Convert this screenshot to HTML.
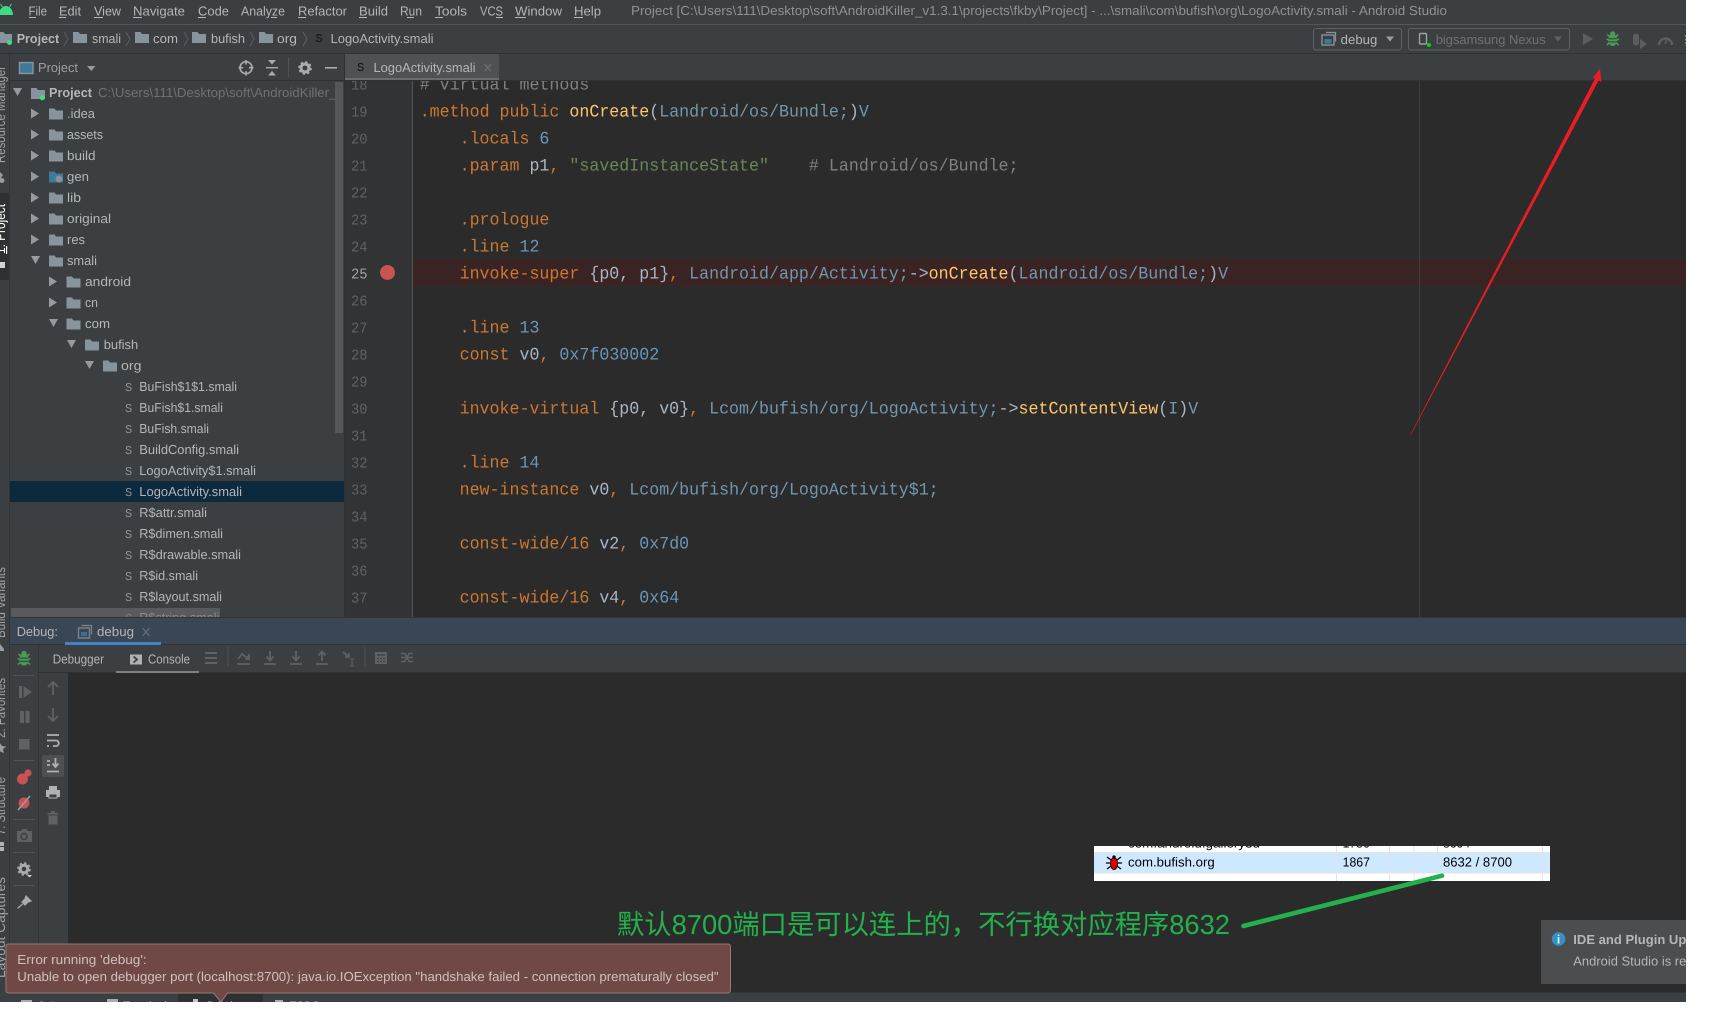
<!DOCTYPE html>
<html><head><meta charset="utf-8"><title>Android Studio</title>
<style>
html,body{margin:0;padding:0;background:#fff;width:1713px;height:1023px;overflow:hidden}
svg{display:block;position:absolute;left:0;top:0}
text{font-family:"Liberation Sans","Noto Sans CJK SC",sans-serif;font-size:13px;fill:#b4b6b8;white-space:pre;text-rendering:geometricPrecision}
.c text{font-family:"Liberation Mono","DejaVu Sans Mono",monospace;font-size:17.5px;fill:#a9b7c6}
.n text{font-family:"Liberation Mono",monospace;font-size:15px;fill:#606366}
.k{fill:#cc7832}.b{fill:#6897bb}.y{fill:#ffc66d}.t{fill:#7297ad}.g{fill:#6a8759}.r{fill:#808080}.p{fill:#a9b7c6}
.s text{font-family:"Liberation Mono",monospace;font-size:12px;fill:#8f9294}
.v text{fill:#9ea2a5;font-size:14px}
</style></head><body>
<svg width="1713" height="1023" viewBox="0 0 1713 1023" xmlns="http://www.w3.org/2000/svg">
<defs>
<path id="f" d="M0 0h5.5l1.5 2H14v9H0z" fill="#87949c"/>
<path id="ar" d="M0 0l8 5-8 5z" fill="#979a9c"/>
<path id="ad" d="M0 0h9l-4.5 8z" fill="#979a9c"/>
<g id="bug"><path d="M-5.5-5l3 2.5M5.5-5l-3 2.5M-6.5 0h3M6.5 0h-3M-6 5.5l3-2.5M6 5.5l-3-2.5" stroke="#499c54" stroke-width="1.6" fill="none"/><ellipse cx="0" cy="0.5" rx="4.6" ry="6" fill="#499c54"/><path d="M-4-.8h8M-4 2.4h8" stroke="#3c3f41" stroke-width="1.1"/><circle cx="0" cy="-5.6" r="2.6" fill="#499c54"/></g>
<g id="cfg"><rect x="0" y="2" width="12" height="10" fill="#3c3f41" stroke="#87949c" stroke-width="1.4"/><rect x="2.5" y="6" width="7" height="4.5" fill="#3d7a9a"/><path d="M4-.5h9.5v9" fill="none" stroke="#87949c" stroke-width="1.2"/></g>
<clipPath id="cTree"><rect x="10" y="81" width="334" height="536"/></clipPath>
<clipPath id="cEd"><rect x="345" y="81" width="1341" height="536"/></clipPath>
<clipPath id="cL"><rect x="0" y="54" width="9.5" height="948"/></clipPath>
<clipPath id="cBot"><rect x="0" y="992" width="1686" height="10"/></clipPath>
<clipPath id="cIns"><rect x="1094" y="846" width="456" height="35"/></clipPath>
<clipPath id="cNot"><rect x="1541" y="920" width="145" height="64"/></clipPath>
</defs>

<!-- base -->
<rect x="0" y="0" width="1686" height="1002" fill="#3c3f41"/>

<!-- menu -->
<rect x="0" y="24" width="1686" height="1" fill="#55585a"/>
<path d="M-1 15C-1 9 3 6 6 6C9 6 13 9 13 15Z" fill="#3ddc84"/><path d="M2.5 7L.5 4M9.5 7L11.5 4" stroke="#3ddc84" stroke-width="1"/>
<g>
<text x="28.5" y="15.5" textLength="18.5" lengthAdjust="spacingAndGlyphs">File</text>
<text x="59" y="15.5" textLength="22" lengthAdjust="spacingAndGlyphs">Edit</text>
<text x="94" y="15.5" textLength="27" lengthAdjust="spacingAndGlyphs">View</text>
<text x="133" y="15.5" textLength="52" lengthAdjust="spacingAndGlyphs">Navigate</text>
<text x="198" y="15.5" textLength="31" lengthAdjust="spacingAndGlyphs">Code</text>
<text x="241" y="15.5" textLength="44" lengthAdjust="spacingAndGlyphs">Analyze</text>
<text x="298" y="15.5" textLength="49" lengthAdjust="spacingAndGlyphs">Refactor</text>
<text x="359" y="15.5" textLength="29" lengthAdjust="spacingAndGlyphs">Build</text>
<text x="400" y="15.5" textLength="22" lengthAdjust="spacingAndGlyphs">Run</text>
<text x="435" y="15.5" textLength="32" lengthAdjust="spacingAndGlyphs">Tools</text>
<text x="480" y="15.5" textLength="23" lengthAdjust="spacingAndGlyphs">VCS</text>
<text x="515" y="15.5" textLength="47" lengthAdjust="spacingAndGlyphs">Window</text>
<text x="574" y="15.5" textLength="27" lengthAdjust="spacingAndGlyphs">Help</text>
<path d="M29 17.5h7M59 17.5h7M94 17.5h9M133 17.5h9M198 17.5h8M271 17.5h6M298 17.5h8M359 17.5h8M407 17.5h7M435 17.5h8M496 17.5h7M515 17.5h11M574 17.5h9" stroke="#b4b6b8" stroke-width="1"/>
<text x="631" y="15" textLength="816" lengthAdjust="spacingAndGlyphs" style="fill:#8f9192">Project [C:\Users\111\Desktop\soft\AndroidKiller_v1.3.1\projects\fkby\Project] - ...\smali\com\bufish\org\LogoActivity.smali - Android Studio</text>
</g>

<!-- breadcrumb toolbar -->
<rect x="0" y="53" width="1686" height="1" fill="#2f3133"/>
<use href="#f" x="-2" y="32"/><circle cx="9.5" cy="42.5" r="2.5" fill="#3ddc84"/>
<text x="16.7" y="43" textLength="42.5" lengthAdjust="spacingAndGlyphs" font-weight="700">Project</text>
<path d="M64 32l4 7-4 7M126 32l4 7-4 7M184 32l4 7-4 7M250 32l4 7-4 7M303 32l4 7-4 7" fill="none" stroke="#5c5f61"/>
<use href="#f" x="73" y="32"/><text x="92" y="43" textLength="29" lengthAdjust="spacingAndGlyphs">smali</text>
<use href="#f" x="135" y="32"/><text x="153" y="43" textLength="25" lengthAdjust="spacingAndGlyphs">com</text>
<use href="#f" x="192" y="32"/><text x="211" y="43" textLength="34" lengthAdjust="spacingAndGlyphs">bufish</text>
<use href="#f" x="259" y="32"/><text x="277" y="43" textLength="20" lengthAdjust="spacingAndGlyphs">org</text>
<text x="315.5" y="42" style="font-family:'Liberation Mono',monospace;font-size:12px;fill:#111">S</text>
<text x="330.5" y="43" textLength="103" lengthAdjust="spacingAndGlyphs">LogoActivity.smali</text>

<!-- run config -->
<rect x="1313.5" y="28.5" width="88" height="21.5" rx="2.5" fill="none" stroke="#5e6163"/>
<use href="#cfg" x="1322" y="33"/>
<text x="1340.7" y="44" textLength="36.6" lengthAdjust="spacingAndGlyphs">debug</text>
<path d="M1386 36.5h8l-4 5z" fill="#9a9c9e"/>
<rect x="1408.5" y="28.5" width="161" height="21.5" rx="2.5" fill="none" stroke="#5e6163"/>
<rect x="1419.5" y="33.5" width="7" height="10.5" rx="1" fill="#3c3f41" stroke="#9aa0a4" stroke-width="1.4"/>
<circle cx="1429" cy="45" r="2" fill="#00dd00"/>
<text x="1435.7" y="44" textLength="110" lengthAdjust="spacingAndGlyphs" style="fill:#6f7274">bigsamsung Nexus</text>
<path d="M1554 36.5h8l-4 5z" fill="#5f6264"/>
<path d="M1583 33l10 6-10 6z" fill="#5b5e60"/>
<use href="#bug" transform="translate(1612.7,39.5)"/>
<path d="M1633 35q3-3 6 0v9q-3 3-6 0z" fill="#5b5e60"/><path d="M1640 39l7 5-7 5z" fill="#5b5e60"/>
<path d="M1659 45a6.5 6.5 0 0 1 13 0" fill="none" stroke="#5b5e60" stroke-width="2.4"/><path d="M1665 44l2.5-6" stroke="#5b5e60" stroke-width="1.5"/>
<path d="M1685.5 35v11" stroke="#499c54" stroke-width="1.2" stroke-dasharray="2 1.5"/>

<!-- tool tab rail -->
<rect x="9" y="54" width="1" height="938" fill="#323436"/>
<rect x="0" y="193" width="9" height="87" fill="#2e3032"/>
<g clip-path="url(#cL)" class="v">
<text transform="translate(5,163) rotate(-90)" textLength="97" lengthAdjust="spacingAndGlyphs">Resource Manager</text>
<path d="M0 172l3 3-3 4z M2 178a2.5 2.5 0 1 1-.1 0z" fill="#9a9da0"/>
<text transform="translate(5,254) rotate(-90)" textLength="50" lengthAdjust="spacingAndGlyphs" style="fill:#fff">1: Project</text>
<rect x="6" y="246" width="1.2" height="8" fill="#fff"/>
<rect x="0" y="262" width="5" height="6" fill="#cfd1d2"/>
<text transform="translate(5,638) rotate(-90)" textLength="71" lengthAdjust="spacingAndGlyphs">Build Variants</text>
<path d="M0 644l4 5v2H0z" fill="#9a9da0"/>
<text transform="translate(5,738) rotate(-90)" textLength="60" lengthAdjust="spacingAndGlyphs">2: Favorites</text>
<path d="M0 743l2 3 4 .5-3 2.7.8 4-3.8-2z" fill="#9a9da0"/>
<text transform="translate(5,835) rotate(-90)" textLength="58" lengthAdjust="spacingAndGlyphs">7: Structure</text>
<rect x="0" y="842" width="4" height="4" fill="#b0b2b4"/><rect x="0" y="847" width="4" height="4" fill="#b0b2b4"/>
<text transform="translate(5,978) rotate(-90)" textLength="101" lengthAdjust="spacingAndGlyphs">Layout Captures</text>
</g>

<!-- project panel -->
<rect x="10" y="80" width="335" height="1" fill="#2f3133"/>
<rect x="19.5" y="62.5" width="13.5" height="11" fill="#3d7a9a" stroke="#87949c" stroke-width="1.4"/>
<text x="38" y="72" textLength="40" lengthAdjust="spacingAndGlyphs" style="fill:#9c9fa1">Project</text>
<path d="M87 66h8.5l-4.2 5z" fill="#9a9c9e"/>
<circle cx="246" cy="67.7" r="6" fill="none" stroke="#a9abad" stroke-width="1.6"/><path d="M246 60v4.5M246 71v4.5M238.5 67.7h4.5M249 67.7h4.5" stroke="#a9abad" stroke-width="1.6"/>
<path d="M266 67.7h12" stroke="#a9abad" stroke-width="1.4"/><path d="M268 60h8l-4 4.5zM268 75.5h8l-4-4.5z" fill="#a9abad"/>
<rect x="288" y="57" width="1" height="20" fill="#505355"/>
<circle cx="305" cy="68" r="4" fill="none" stroke="#a9abad" stroke-width="3"/><circle cx="305" cy="68" r="6" fill="none" stroke="#a9abad" stroke-width="1.6" stroke-dasharray="2.4 2.3"/>
<rect x="325" y="67" width="12" height="1.6" fill="#a9abad"/>

<rect x="10" y="481" width="334" height="21" fill="#0d293e"/>
<g clip-path="url(#cTree)">
<use href="#ad" x="13" y="88"/>
<use href="#f" x="31" y="88"/><circle cx="42.3" cy="97.7" r="2.6" fill="#3ddc84"/>
<text x="49" y="97" textLength="43" lengthAdjust="spacingAndGlyphs" font-weight="700">Project</text>
<text x="98" y="97" textLength="245" lengthAdjust="spacingAndGlyphs" style="fill:#6f7274">C:\Users\111\Desktop\soft\AndroidKiller_v</text>

<use href="#ar" x="31" y="108.5"/><use href="#f" x="49" y="108.5"/><text x="67" y="118.2" textLength="28" lengthAdjust="spacingAndGlyphs">.idea</text>
<use href="#ar" x="31" y="129.5"/><use href="#f" x="49" y="129.5"/><text x="67" y="139.2" textLength="36" lengthAdjust="spacingAndGlyphs">assets</text>
<use href="#ar" x="31" y="150.5"/><use href="#f" x="49" y="150.5"/><text x="67" y="160.2" textLength="28.5" lengthAdjust="spacingAndGlyphs">build</text>
<use href="#ar" x="31" y="171.5"/><path d="M49 171.5h5.5l1.5 2h7v9H49z" fill="#3d7a9a"/><circle cx="59" cy="179" r="3.5" fill="#87949c"/><text x="67" y="181.2" textLength="22" lengthAdjust="spacingAndGlyphs">gen</text>
<use href="#ar" x="31" y="192.5"/><use href="#f" x="49" y="192.5"/><text x="67" y="202.2" textLength="14" lengthAdjust="spacingAndGlyphs">lib</text>
<use href="#ar" x="31" y="213.5"/><use href="#f" x="49" y="213.5"/><text x="67" y="223.2" textLength="44" lengthAdjust="spacingAndGlyphs">original</text>
<use href="#ar" x="31" y="234.5"/><use href="#f" x="49" y="234.5"/><text x="67" y="244.2" textLength="18" lengthAdjust="spacingAndGlyphs">res</text>
<use href="#ad" x="31" y="256"/><use href="#f" x="49" y="255.5"/><text x="67" y="265.2" textLength="30" lengthAdjust="spacingAndGlyphs">smali</text>
<use href="#ar" x="49" y="276.5"/><use href="#f" x="66.5" y="276.5"/><text x="85" y="286.2" textLength="46" lengthAdjust="spacingAndGlyphs">android</text>
<use href="#ar" x="49" y="297.5"/><use href="#f" x="66.5" y="297.5"/><text x="85" y="307.2" textLength="13" lengthAdjust="spacingAndGlyphs">cn</text>
<use href="#ad" x="49" y="319"/><use href="#f" x="66.5" y="318.5"/><text x="85" y="328.2" textLength="25" lengthAdjust="spacingAndGlyphs">com</text>
<use href="#ad" x="67" y="340"/><use href="#f" x="85" y="339.5"/><text x="103.7" y="349.2" textLength="34.5" lengthAdjust="spacingAndGlyphs">bufish</text>
<use href="#ad" x="85" y="361"/><use href="#f" x="103" y="360.5"/><text x="121" y="370.2" textLength="20.5" lengthAdjust="spacingAndGlyphs">org</text>

<g class="s">
<text x="125" y="391">S</text><text x="125" y="412">S</text><text x="125" y="433">S</text><text x="125" y="454">S</text><text x="125" y="475">S</text><text x="125" y="496">S</text><text x="125" y="517">S</text><text x="125" y="538">S</text><text x="125" y="559">S</text><text x="125" y="580">S</text><text x="125" y="601">S</text><text x="125" y="622">S</text>
</g>
<text x="139.3" y="391.2" textLength="97.7" lengthAdjust="spacingAndGlyphs">BuFish$1$1.smali</text>
<text x="139.3" y="412.2" textLength="83.7" lengthAdjust="spacingAndGlyphs">BuFish$1.smali</text>
<text x="139.3" y="433.2" textLength="69.7" lengthAdjust="spacingAndGlyphs">BuFish.smali</text>
<text x="139.3" y="454.2" textLength="99.7" lengthAdjust="spacingAndGlyphs">BuildConfig.smali</text>
<text x="139.3" y="475.2" textLength="116.7" lengthAdjust="spacingAndGlyphs">LogoActivity$1.smali</text>
<text x="139.3" y="496.2" textLength="102.7" lengthAdjust="spacingAndGlyphs">LogoActivity.smali</text>
<text x="139.3" y="517.2" textLength="67.7" lengthAdjust="spacingAndGlyphs">R$attr.smali</text>
<text x="139.3" y="538.2" textLength="83.7" lengthAdjust="spacingAndGlyphs">R$dimen.smali</text>
<text x="139.3" y="559.2" textLength="101.7" lengthAdjust="spacingAndGlyphs">R$drawable.smali</text>
<text x="139.3" y="580.2" textLength="58.7" lengthAdjust="spacingAndGlyphs">R$id.smali</text>
<text x="139.3" y="601.2" textLength="82.7" lengthAdjust="spacingAndGlyphs">R$layout.smali</text>
<text x="139.3" y="622.2" textLength="80" lengthAdjust="spacingAndGlyphs">R$string.smali</text>
</g>
<rect x="11" y="608" width="209" height="9" fill="#6a6c6e" opacity=".6"/>
<rect x="335" y="82" width="8" height="351" fill="#55585a"/>

<!-- tab -->
<rect x="345" y="54" width="154" height="26" fill="#4e5254"/>
<rect x="345" y="78" width="154" height="2" fill="#6a6d6f"/>
<rect x="344" y="54" width="1" height="563" fill="#2f3133"/>
<text x="357" y="71" style="font-family:'Liberation Mono',monospace;font-size:12px;fill:#111">S</text>
<text x="373.5" y="72" textLength="102" lengthAdjust="spacingAndGlyphs">LogoActivity.smali</text>
<path d="M484.5 64l6.5 7.5M491 64l-6.5 7.5" stroke="#6e7173" stroke-width="1"/>
<rect x="345" y="80" width="1341" height="1" fill="#2f3133"/>

<!-- editor -->
<rect x="345" y="81" width="68" height="536" fill="#313335"/>
<rect x="413" y="81" width="1273" height="536" fill="#2b2b2b"/>
<rect x="412" y="81" width="1" height="536" fill="#555"/>
<rect x="413" y="259" width="1273" height="27" fill="#3a2323"/>
<rect x="1419" y="81" width="1" height="536" fill="#3f3f3f"/>
<circle cx="387.5" cy="272.5" r="7.5" fill="#c75450"/>

<g clip-path="url(#cEd)">
<g class="n" transform="scale(.917,1)">
<text x="382.8" y="89.3">18</text><text x="382.8" y="116.3">19</text><text x="382.8" y="143.3">20</text><text x="382.8" y="170.3">21</text><text x="382.8" y="197.3">22</text><text x="382.8" y="224.3">23</text><text x="382.8" y="251.3">24</text><text x="382.8" y="278.3" style="fill:#a4a3a3">25</text><text x="382.8" y="305.3">26</text><text x="382.8" y="332.3">27</text><text x="382.8" y="359.3">28</text><text x="382.8" y="386.3">29</text><text x="382.8" y="413.3">30</text><text x="382.8" y="440.3">31</text><text x="382.8" y="467.3">32</text><text x="382.8" y="494.3">33</text><text x="382.8" y="521.3">34</text><text x="382.8" y="548.3">35</text><text x="382.8" y="575.3">36</text><text x="382.8" y="602.3">37</text>
</g>
<g class="c" transform="scale(.9503,1)">
<text x="441.65" y="89.3" xml:space="preserve"><tspan class="r"># virtual methods</tspan></text>
<text x="441.65" y="116.3" xml:space="preserve"><tspan class="k">.method public </tspan><tspan class="y">onCreate</tspan><tspan class="p">(</tspan><tspan class="t">Landroid/os/Bundle;</tspan><tspan class="p">)</tspan><tspan class="t">V</tspan></text>
<text x="483.64" y="143.3" xml:space="preserve"><tspan class="k">.locals </tspan><tspan class="b">6</tspan></text>
<text x="483.64" y="170.3" xml:space="preserve"><tspan class="k">.param </tspan><tspan class="p">p1</tspan><tspan class="k">, </tspan><tspan class="g">"savedInstanceState"</tspan><tspan class="r">    # Landroid/os/Bundle;</tspan></text>
<text x="483.64" y="224.3" xml:space="preserve"><tspan class="k">.prologue</tspan></text>
<text x="483.64" y="251.3" xml:space="preserve"><tspan class="k">.line </tspan><tspan class="b">12</tspan></text>
<text x="483.64" y="278.3" xml:space="preserve"><tspan class="k">invoke-super </tspan><tspan class="p">{p0, p1}</tspan><tspan class="k">, </tspan><tspan class="t">Landroid/app/Activity;</tspan><tspan class="p">-&gt;</tspan><tspan class="y">onCreate</tspan><tspan class="p">(</tspan><tspan class="t">Landroid/os/Bundle;</tspan><tspan class="p">)</tspan><tspan class="t">V</tspan></text>
<text x="483.64" y="332.3" xml:space="preserve"><tspan class="k">.line </tspan><tspan class="b">13</tspan></text>
<text x="483.64" y="359.3" xml:space="preserve"><tspan class="k">const </tspan><tspan class="p">v0</tspan><tspan class="k">, </tspan><tspan class="b">0x7f030002</tspan></text>
<text x="483.64" y="413.3" xml:space="preserve"><tspan class="k">invoke-virtual </tspan><tspan class="p">{p0, v0}</tspan><tspan class="k">, </tspan><tspan class="t">Lcom/bufish/org/LogoActivity;</tspan><tspan class="p">-&gt;</tspan><tspan class="y">setContentView</tspan><tspan class="p">(</tspan><tspan class="t">I</tspan><tspan class="p">)</tspan><tspan class="t">V</tspan></text>
<text x="483.64" y="467.3" xml:space="preserve"><tspan class="k">.line </tspan><tspan class="b">14</tspan></text>
<text x="483.64" y="494.3" xml:space="preserve"><tspan class="k">new-instance </tspan><tspan class="p">v0</tspan><tspan class="k">, </tspan><tspan class="t">Lcom/bufish/org/LogoActivity$1;</tspan></text>
<text x="483.64" y="548.3" xml:space="preserve"><tspan class="k">const-wide/16 </tspan><tspan class="p">v2</tspan><tspan class="k">, </tspan><tspan class="b">0x7d0</tspan></text>
<text x="483.64" y="602.3" xml:space="preserve"><tspan class="k">const-wide/16 </tspan><tspan class="p">v4</tspan><tspan class="k">, </tspan><tspan class="b">0x64</tspan></text>
</g>
</g>

<!-- red arrow -->
<path d="M1600 69L1601.5 82 1598.6 80.5 1410.8 435 1410.2 435 1595 78.5 1593 77.5Z" fill="#ed1c24"/>

<!-- debug window header -->
<rect x="10" y="617" width="1676" height="27" fill="#3b4655"/>
<rect x="10" y="617" width="1676" height="1" fill="#323436"/>
<rect x="10" y="644" width="1676" height="1" fill="#2f3133"/>
<text x="16.7" y="636" textLength="41.3" lengthAdjust="spacingAndGlyphs">Debug:</text>
<g transform="translate(78.5,626)" opacity=".8"><rect x="0" y="2" width="11" height="10" fill="none" stroke="#87949c" stroke-width="1.4"/><path d="M3-.5h10v9" fill="none" stroke="#87949c" stroke-width="1.2"/><rect x="2.5" y="6" width="6" height="4" fill="#3d7a9a"/></g>
<text x="97" y="636" textLength="37" lengthAdjust="spacingAndGlyphs">debug</text>
<path d="M142.5 628l7 8M149.5 628l-7 8" stroke="#66717c" stroke-width="1"/>
<rect x="65" y="642" width="96" height="3" fill="#4083c9"/>

<!-- debug toolbar -->
<rect x="38" y="645" width="1" height="347" fill="#323436"/>
<rect x="39" y="672" width="1647" height="1" fill="#2f3133"/>
<text x="52.7" y="663.3" textLength="51.3" lengthAdjust="spacingAndGlyphs">Debugger</text>
<rect x="130" y="654.5" width="12" height="10" fill="#afb1b3"/><path d="M133.5 656.5l3.5 3-3.5 3" fill="none" stroke="#3c3f41" stroke-width="1.8"/>
<text x="148" y="663.3" textLength="42" lengthAdjust="spacingAndGlyphs">Console</text>
<rect x="116" y="671" width="83" height="2" fill="#7e8183"/>
<path d="M205 653h12M205 658h12M205 663h12" stroke="#5f6264" stroke-width="2"/>
<rect x="227.5" y="647" width="1" height="20" fill="#4f5254"/>
<g fill="none" stroke="#5f6264" stroke-width="1.8">
<path d="M237 664h13M238 659l4-5 4 3h3M249 654v5h-4"/>
<path d="M264 664h12M270 651v9M266.5 656.5l3.5 4 3.5-4"/>
<path d="M290 664h12M296 651v9M292.5 656.5l3.5 4 3.5-4"/>
<path d="M316 664h12M322 661v-9M318.5 655.5l3.5-4 3.5 4"/>
<path d="M343 652l6 5M349 653v4h-4"/>
<path d="M350 659h4M352 659v7M350 666h4" stroke-width="1"/>
<path d="M401 653.5h4l2 4-2 4h-4M413 653.5h-4l-2 4 2 4h4M401 657.5h12" stroke-width="1.5"/>
</g>
<rect x="364.5" y="647" width="1" height="20" fill="#4f5254"/>
<rect x="375" y="652" width="12" height="12" fill="#5f6264"/><path d="M377 655h8M377 658.5h2M380 658.5h2M383 658.5h2M377 661.5h2M380 661.5h2M383 661.5h2" stroke="#3c3f41" stroke-width="1.3"/>

<!-- left debug icons -->
<rect x="14" y="675" width="20" height="1" fill="#505355"/>
<use href="#bug" transform="translate(24,659)"/>
<path d="M19 686h3v12h-3zM23.5 686l8.5 6-8.5 6z" fill="#5f6264"/>
<rect x="20" y="711" width="4" height="12" fill="#5f6264"/><rect x="25.5" y="711" width="4" height="12" fill="#5f6264"/>
<rect x="19" y="739" width="10.5" height="10.5" fill="#5f6264"/>
<rect x="14" y="760" width="20" height="1" fill="#505355"/>
<circle cx="22.5" cy="779" r="5.5" fill="#c75450"/><circle cx="28" cy="773" r="3.6" fill="#c75450"/>
<circle cx="24" cy="803" r="5.5" fill="#c75450"/><path d="M18 810l12-14" stroke="#9a9c9e" stroke-width="1.6"/>
<rect x="14" y="819" width="20" height="1" fill="#505355"/>
<path d="M17 831h4l1.5-2h4l1.5 2h4v11H17z" fill="#5f6264"/><circle cx="24" cy="836.5" r="3" fill="none" stroke="#3c3f41" stroke-width="1.4"/>
<rect x="14" y="852" width="20" height="1" fill="#505355"/>
<circle cx="24" cy="869" r="3.8" fill="none" stroke="#a9abad" stroke-width="3"/><circle cx="24" cy="869" r="6" fill="none" stroke="#a9abad" stroke-width="1.6" stroke-dasharray="2.4 2.3"/><path d="M27 875h5l-2.5 2.5z" fill="#cfd1d2"/>
<rect x="14" y="885" width="20" height="1" fill="#505355"/>
<path d="M26 896l5 5-3 1-3 3-3-3 3-3zM22.5 904l-5 4.5" fill="#a9abad" stroke="#a9abad" stroke-width="1.2"/>

<rect x="68" y="673" width="1618" height="319" fill="#2b2b2b"/>
<g fill="none" stroke="#5f6264" stroke-width="1.8"><path d="M53 695v-13M48 687l5-5 5 5"/><path d="M53 708v13M48 716l5 5 5-5"/></g>
<rect x="42" y="755" width="22" height="22" rx="2" fill="#4c5052"/>
<g fill="none" stroke="#afb1b3" stroke-width="1.8"><path d="M47 735h12M47 740.5h9a2.5 2.5 0 0 1 0 5.5h-3M47 746h2"/><path d="M47 761h3M47 765h3M47 771.5h12M55.5 758v8M52.5 763.5l3 3.5 3-3.5"/></g>
<path d="M49 786h8v4h3v7h-14v-7h3z" fill="#afb1b3"/><rect x="49" y="794" width="8" height="4" fill="#3c3f41" stroke="#afb1b3"/>
<path d="M47.5 813h11v1.5h-11zM51 811h4v2h-4zM48.5 815.5h9v9h-9z" fill="#5f6264"/>

<!-- inset screenshot -->
<rect x="1094" y="846" width="456" height="35" fill="#fff"/>
<rect x="1094" y="853" width="456" height="19.5" fill="#cde8ff"/>
<rect x="1094" y="852" width="456" height="1" fill="#e4e4e4"/><rect x="1094" y="872.5" width="456" height="1" fill="#e4e4e4"/>
<path d="M1336.5 846v35M1389.5 846v35M1414 846v35M1437.5 846v35M1542.5 846v35" stroke="#e4e4e4" stroke-width="1"/>
<g clip-path="url(#cIns)">
<text x="1128" y="847.5" textLength="132" lengthAdjust="spacingAndGlyphs" style="fill:#000">com.android.gallery3d</text>
<text x="1342.6" y="847.5" textLength="27" lengthAdjust="spacingAndGlyphs" style="fill:#000">1786</text>
<text x="1443" y="847.5" textLength="27" lengthAdjust="spacingAndGlyphs" style="fill:#000">8604</text>
<text x="1128" y="866.7" textLength="86.7" lengthAdjust="spacingAndGlyphs" style="fill:#000">com.bufish.org</text>
<text x="1342.6" y="866.7" textLength="27.4" lengthAdjust="spacingAndGlyphs" style="fill:#000">1867</text>
<text x="1443" y="866.7" textLength="69" lengthAdjust="spacingAndGlyphs" style="fill:#000">8632 / 8700</text>
<path d="M1107 857l4 3M1121 857l-4 3M1106 863h4M1122 863h-4M1107 869l4-3M1121 869l-4-3" stroke="#000" stroke-width="1.2"/>
<ellipse cx="1114" cy="863.5" rx="3.6" ry="6" fill="#e00000" stroke="#000" stroke-width=".8"/>
<circle cx="1114" cy="857" r="1.6" fill="#000"/>
</g>

<!-- green annotation -->
<text x="617" y="934" textLength="613" lengthAdjust="spacingAndGlyphs" style="font-size:27.5px;fill:#22b14c">默认8700端口是可以连上的，不行换对应程序8632</text>
<path d="M1243.5 926L1442 875.7" stroke="#22b14c" stroke-width="4.6" stroke-linecap="round"/>

<!-- notification -->
<rect x="1541" y="920" width="145" height="64" fill="#4b4d4f"/>
<g clip-path="url(#cNot)">
<circle cx="1558.6" cy="939" r="6.8" fill="#3592c4"/>
<text x="1558.6" y="943.5" text-anchor="middle" style="font-size:12px;font-weight:700;fill:#e8eef2">i</text>
<text x="1573.3" y="944" textLength="113" lengthAdjust="spacingAndGlyphs" font-weight="700">IDE and Plugin Up</text>
<text x="1573.3" y="965.7" textLength="113" lengthAdjust="spacingAndGlyphs">Android Studio is re</text>
</g>

<!-- bottom bar -->
<rect x="10" y="992" width="1676" height="10" fill="#3c3f41"/>
<rect x="10" y="992" width="1676" height="1" fill="#323436"/>
<rect x="178" y="993" width="85" height="9" fill="#2e3032"/>
<g clip-path="url(#cBot)">
<rect x="21" y="1000" width="11" height="4" fill="#a9abad"/>
<text x="38" y="1010.5" textLength="50" lengthAdjust="spacingAndGlyphs">6: Logcat</text>
<rect x="107" y="999" width="11" height="5" fill="#a9abad"/>
<text x="123" y="1010.5" textLength="44" lengthAdjust="spacingAndGlyphs">Terminal</text>
<rect x="193" y="999" width="5" height="5" fill="#c0c2c4"/>
<text x="207" y="1010.5" textLength="40" lengthAdjust="spacingAndGlyphs">5: Debug</text>
<rect x="275" y="1000" width="8" height="4" fill="#a9abad"/>
<text x="290" y="1010.5" textLength="30" lengthAdjust="spacingAndGlyphs">TODO</text>
</g>

<!-- error balloon -->
<path d="M8.5 944H728a2.5 2.5 0 0 1 2.5 2.5V990.5a2.5 2.5 0 0 1-2.5 2.5H227.5L221 1002 213.5 993H8.5a2.5 2.5 0 0 1-2.5-2.5V946.5a2.5 2.5 0 0 1 2.5-2.5Z" fill="#704845" stroke="#917a77" stroke-width="1"/>
<text x="17.3" y="964" textLength="129.4" lengthAdjust="spacingAndGlyphs" style="fill:#cdc2bf">Error running 'debug':</text>
<text x="17.3" y="981" textLength="701.3" lengthAdjust="spacingAndGlyphs" style="fill:#cdc2bf">Unable to open debugger port (localhost:8700): java.io.IOException "handshake failed - connection prematurally closed"</text>

<!-- white margins -->
<rect x="1686" y="0" width="27" height="1023" fill="#fff"/>
<rect x="0" y="1002" width="1713" height="21" fill="#fff"/>
</svg>
</body></html>
